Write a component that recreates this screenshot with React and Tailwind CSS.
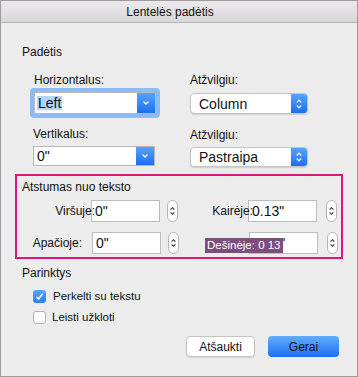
const DownArrow = () => (
  <svg width="8" height="6" viewBox="0 0 8 6">
    <path d="M1.5 1.5 L4 4 L6.5 1.5" fill="none" stroke="white" strokeWidth="1.3" />
  </svg>
);

const UpDown = ({ color = "white", w = 8, h = 12 }) => (
  <svg width={w} height={h} viewBox="0 0 8 12">
    <path d="M1.8 4.5 L4 2.2 L6.2 4.5" fill="none" stroke={color} strokeWidth="1.2" />
    <path d="M1.8 7.5 L4 9.8 L6.2 7.5" fill="none" stroke={color} strokeWidth="1.2" />
  </svg>
);

const Stepper = ({ className = "" }) => (
  <div className={`w-[11px] h-[22px] rounded-full border border-[#b4b4b4] bg-white flex items-center justify-center ${className}`}>
    <UpDown color="#333" w={7} h={14} />
  </div>
);

const DropSelect = ({ value, selected, h = "h-[22px]" }) => (
  <div className={`flex ${h} w-[122px] bg-white border border-[#b8b8b8]`}>
    <div className="flex-1 flex items-center pl-[2px] text-[14px]">
      <span className={selected ? "bg-[#b3d4fc] px-[1px]" : "px-[1px]"}>{value}</span>
    </div>
    <div className="w-[18px] bg-gradient-to-b from-[#56a2fa] to-[#1b6ef3] flex items-center justify-center">
      <DownArrow />
    </div>
  </div>
);

const PopupSelect = ({ value, h = "h-[21px]" }) => (
  <div className={`flex ${h} w-[118px] bg-white border border-[#c3c3c3] rounded-[4px] shadow-[0_1px_1px_rgba(0,0,0,0.12)] overflow-hidden`}>
    <div className="flex-1 flex items-center pl-[8px] text-[14px]">{value}</div>
    <div className="w-[16px] bg-gradient-to-b from-[#56a2fa] to-[#1b6ef3] flex items-center justify-center">
      <UpDown />
    </div>
  </div>
);

const Box = ({ value, className = "" }) => (
  <div className={`h-[22px] w-[69px] bg-white border border-[#bdbdbd] text-[14px] flex items-center pl-[3px] ${className}`}>
    {value}
  </div>
);

export default function App() {
  return (
    <div
      className="w-[358px] h-[377px] bg-[#ececec] border border-[#9c9c9c] flex flex-col text-[#111]"
      style={{ fontFamily: '"Liberation Sans", Arial, sans-serif' }}
    >
      <div className="h-[22px] shrink-0 bg-gradient-to-b from-[#ebe9eb] to-[#d9d7d9] border-b border-[#b3b3b3] flex items-center justify-center pr-[18px] text-[12px]">
        Lentelės padėtis
      </div>

      <div className="pl-[21px] mt-[22px] text-[12px] leading-[14px]">Padėtis</div>

      <div className="flex mt-[14px] text-[12px] leading-[14px]">
        <div className="ml-[29px] w-[160px]">
          <div className="pl-[4px]">Horizontalus:</div>
          <div className="mt-[1px] w-[130px] rounded-[4px] bg-[#8dbbf6] p-[4px]">
            <DropSelect value="Left" selected />
          </div>
          <div className="pl-[3px] mt-[9px]">Vertikalus:</div>
          <div className="pl-[3px] mt-[5px]">
            <DropSelect value={'0"'} h="h-[20px]" />
          </div>
        </div>
        <div>
          <div>Atžvilgiu:</div>
          <div className="h-[31px] mt-[1px] flex items-center">
            <PopupSelect value="Column" />
          </div>
          <div className="mt-[9px]">Atžvilgiu:</div>
          <div className="mt-[5px]">
            <PopupSelect value="Pastraipa" h="h-[20px]" />
          </div>
        </div>
      </div>

      <div className="ml-[14px] mt-[7px] w-[328px] h-[85px] border-2 border-[#e0157d] text-[12px] leading-[14px]">
        <div className="pl-[5px] mt-[4px]">Atstumas nuo teksto</div>
        <div className="flex items-center mt-[6px]">
          <span className="relative z-10 w-[78px] text-right">Viršuje:</span>
          <Box value={'0"'} className="-ml-[4px]" />
          <Stepper className="ml-[7px]" />
          <span className="relative z-10 w-[75px] text-right">Kairėje:</span>
          <Box value={'0.13"'} className="-ml-[5px]" />
          <Stepper className="ml-[9px]" />
        </div>
        <div className="flex items-center mt-[10px]">
          <span className="w-[65px] text-right">Apačioje:</span>
          <Box value={'0"'} className="ml-[10px]" />
          <Stepper className="ml-[7px]" />
          <div className="relative ml-[70px]">
            <Box value={'0.13"'} />
            <span className="absolute left-[-44px] top-[6px] h-[15px] bg-[#7b4e7c] text-white text-[11.5px] leading-[15px] px-[2px] whitespace-nowrap">
              Dešinėje: 0 13
            </span>
          </div>
          <Stepper className="ml-[9px]" />
        </div>
      </div>

      <div className="pl-[21px] mt-[7px] text-[12px] leading-[14px]">Parinktys</div>
      <div className="flex items-center ml-[32px] mt-[9px] text-[11.5px] leading-[14px]">
        <div className="w-[13px] h-[13px] rounded-[3px] bg-gradient-to-b from-[#5aa5fa] to-[#2a7cf3] flex items-center justify-center">
          <svg width="9" height="9" viewBox="0 0 9 9">
            <path d="M1.5 4.8 L3.6 7 L7.6 1.6" fill="none" stroke="white" strokeWidth="1.5" />
          </svg>
        </div>
        <span className="ml-[7px]">Perkelti su tekstu</span>
      </div>
      <div className="flex items-center ml-[32px] mt-[7px] text-[11.5px] leading-[14px]">
        <div className="w-[13px] h-[13px] rounded-[3px] bg-white border border-[#b0b0b0]" />
        <span className="ml-[6px]">Leisti užkloti</span>
      </div>

      <div className="flex justify-end gap-[13px] pr-[18px] mt-[12px] text-[12px]">
        <div className="w-[69px] h-[21px] bg-white border border-[#c4c4c4] rounded-[4px] flex items-center justify-center shadow-[0_1px_1px_rgba(0,0,0,0.1)]">
          Atšaukti
        </div>
        <div className="w-[71px] h-[21px] rounded-[4px] bg-gradient-to-b from-[#63adfb] to-[#1b6ef3] flex items-center justify-center">
          Gerai
        </div>
      </div>
    </div>
  );
}
